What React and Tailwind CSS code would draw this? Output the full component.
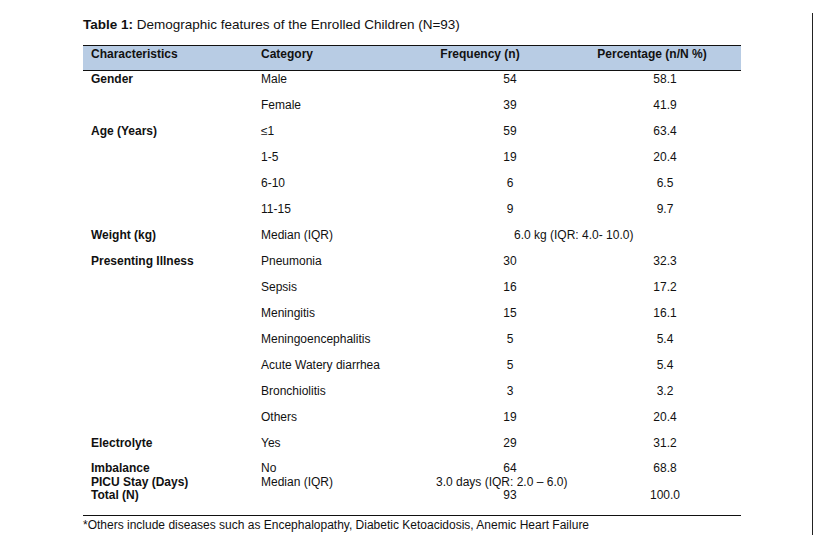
// Table 1 — demographic features, rendered like a journal PDF page
const rows = [
  { c1: 'Gender', c2: 'Male', n: '54', p: '58.1' },
  { c1: '', c2: 'Female', n: '39', p: '41.9' },
  { c1: 'Age (Years)', c2: '≤1', n: '59', p: '63.4' },
  { c1: '', c2: '1-5', n: '19', p: '20.4' },
  { c1: '', c2: '6-10', n: '6', p: '6.5' },
  { c1: '', c2: '11-15', n: '9', p: '9.7' },
  { c1: 'Weight (kg)', c2: 'Median (IQR)', wide: '6.0 kg (IQR: 4.0- 10.0)' },
  { c1: 'Presenting Illness', c2: 'Pneumonia', n: '30', p: '32.3' },
  { c1: '', c2: 'Sepsis', n: '16', p: '17.2' },
  { c1: '', c2: 'Meningitis', n: '15', p: '16.1' },
  { c1: '', c2: 'Meningoencephalitis', n: '5', p: '5.4' },
  { c1: '', c2: 'Acute Watery diarrhea', n: '5', p: '5.4' },
  { c1: '', c2: 'Bronchiolitis', n: '3', p: '3.2' },
  { c1: '', c2: 'Others', n: '19', p: '20.4' },
  { c1: 'Electrolyte', c2: 'Yes', n: '29', p: '31.2' },
]

const grid = 'grid grid-cols-[170px_144px_166px_178px]'

export default function App() {
  return (
    <div className="flex bg-white text-[#111] font-['Liberation_Sans',Arial,sans-serif] w-[814px] h-[550px] overflow-hidden">
      <div className="w-[812px] pl-[83px] pt-[16px]">
        {/* titre */}
        <p className="text-[13.5px] leading-[17px]">
          <span className="font-bold">Table 1:</span> Demographic features of the Enrolled Children (N=93)
        </p>

        <div className="w-[658px] mt-[12px]">
          {/* en-tête */}
          <div className={`${grid} h-[26px] items-start pt-[1px] bg-[#b8cce4] border-y border-[#111] text-[12px] font-bold leading-[14px]`}>
            <div className="pl-[8px]">Characteristics</div>
            <div className="pl-[8px]">Category</div>
            <div className="text-center">Frequency (n)</div>
            <div className="text-center">Percentage (n/N %)</div>
          </div>

          {rows.map((r, i) => (
            <div key={i} className={`${grid} h-[26px] items-start pt-[1px] text-[12px] leading-[14px]`}>
              <div className="pl-[8px] font-bold">{r.c1}</div>
              <div className="pl-[8px]">{r.c2}</div>
              {r.wide ? (
                <div className="col-span-2 pl-[117px]">{r.wide}</div>
              ) : (
                <>
                  <div className="pl-[60px] text-center">{r.n}</div>
                  <div className="pl-[26px] text-center">{r.p}</div>
                </>
              )}
            </div>
          ))}

          {/* dernier bloc serré */}
          <div className={`${grid} pt-[1px] text-[12px] leading-[13.5px] pb-[12px]`}>
            <div className="pl-[8px] font-bold">
              <div>Imbalance</div>
              <div>PICU Stay (Days)</div>
              <div>Total (N)</div>
            </div>
            <div className="pl-[8px]">
              <div>No</div>
              <div>Median (IQR)</div>
            </div>
            <div className="col-span-2">
              <div className="grid grid-cols-[166px_178px]">
                <div className="pl-[60px] text-center">64</div>
                <div className="pl-[26px] text-center">68.8</div>
              </div>
              <div className="pl-[39px]">3.0 days (IQR: 2.0 – 6.0)</div>
              <div className="grid grid-cols-[166px_178px]">
                <div className="pl-[60px] text-center">93</div>
                <div className="pl-[26px] text-center">100.0</div>
              </div>
            </div>
          </div>

          <div className="border-t border-[#111] pt-[2px] text-[12px] leading-[14px]">
            *Others include diseases such as Encephalopathy, Diabetic Ketoacidosis, Anemic Heart Failure
          </div>
        </div>
      </div>

      {/* bord de page */}
      <div className="w-px mt-[13px] h-[522px] bg-[#222]" />
    </div>
  )
}
